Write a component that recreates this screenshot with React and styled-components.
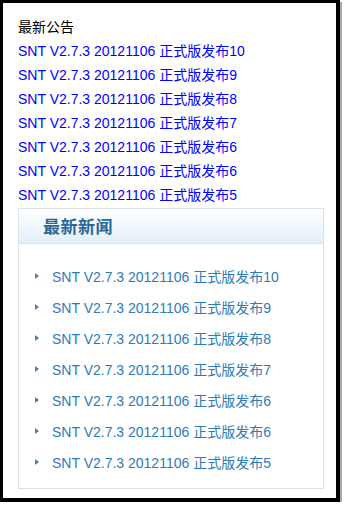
import React from "react";
import styled, { createGlobalStyle } from "styled-components";

const GlobalStyle = createGlobalStyle`
    html, body {
        margin : 0;
        padding : 0;
        background-color : #ffffff;
    }
    body {
        font-family : "Liberation Sans", Arial, "Noto Sans CJK SC", sans-serif;
        font-size : 14px;
    }
`

const Frame = styled.div`
    box-sizing : border-box;
    width : 340px;
    height : 502px;
    border-style : solid;
    border-color : #000000;
    border-width : 3px 4px 4px 3px;
    box-shadow : 2px 2px 0 #a8a8a8;
    padding : 12px 12px 0 15px;
    background-color : #ffffff;
`

const NoticeTitle = styled.div`
    line-height : 24px;
    color : #000000;
`

const NoticeLink = styled.a`
    display : block;
    line-height : 24px;
    color : #0000ff;
    text-decoration : none;
    white-space : nowrap;
`

const NewsBox = styled.div`
    width : 306px;
    box-sizing : border-box;
    border : 1px solid #dfe3e6;
    background-color : #ffffff;
    margin-top : 1px;
`

const NewsHeader = styled.div`
    display : flex;
    align-items : center;
    height : 35px;
    padding-left : 24px;
    padding-bottom : 2px;
    box-sizing : border-box;
    background : linear-gradient(#ffffff, #e2eef8);
    border-bottom : 1px solid #d9e0e6;
`

const NewsTitle = styled.h3`
    margin : 0;
    font-size : 17px;
    font-weight : bold;
    color : #2b6898;
    letter-spacing : 0.5px;
`

const NewsList = styled.ul`
    list-style : none;
    margin : 0;
    padding : 16px 0 10px 0;
`

const NewsItem = styled.li`
    display : flex;
    align-items : center;
    height : 31.1px;
    padding-left : 16px;
`

const Arrow = styled.span`
    width : 0;
    height : 0;
    border-top : 3px solid transparent;
    border-bottom : 3px solid transparent;
    border-left : 4px solid #4d80b0;
    margin-right : 13px;
`

const NewsLink = styled.a`
    color : #2f7bb6;
    text-decoration : none;
    white-space : nowrap;
`

const notices = [10, 9, 8, 7, 6, 6, 5];

const App = () => {
    return (
        <>
            <GlobalStyle />
            <Frame>
                <NoticeTitle>最新公告</NoticeTitle>
                {notices.map((n, i) => (
                    <NoticeLink key={i} href="#">SNT V2.7.3 20121106 正式版发布{n}</NoticeLink>
                ))}
                <NewsBox>
                    <NewsHeader>
                        <NewsTitle>最新新闻</NewsTitle>
                    </NewsHeader>
                    <NewsList>
                        {notices.map((n, i) => (
                            <NewsItem key={i}>
                                <Arrow />
                                <NewsLink href="#">SNT V2.7.3 20121106 正式版发布{n}</NewsLink>
                            </NewsItem>
                        ))}
                    </NewsList>
                </NewsBox>
            </Frame>
        </>
    )
};

export default App;
